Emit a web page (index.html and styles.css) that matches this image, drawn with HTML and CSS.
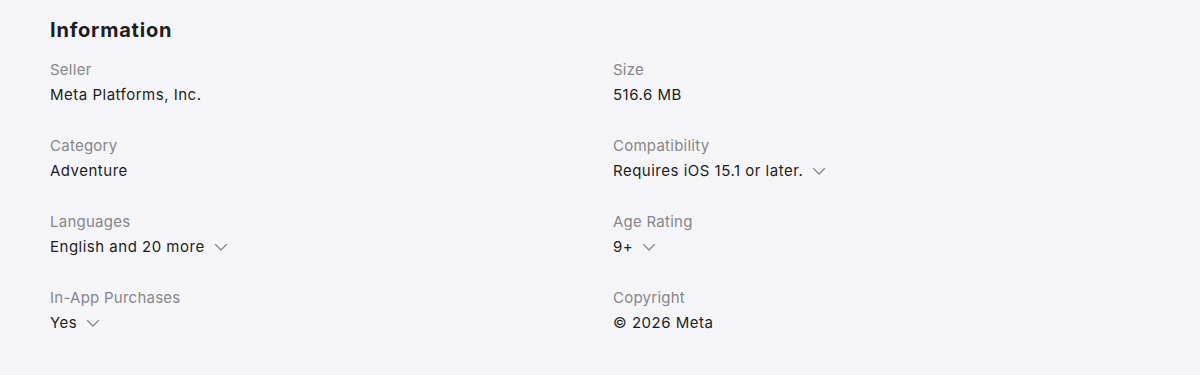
FILE: index.html
```html
<!DOCTYPE html>
<html lang="en">
<head>
    <meta charset="UTF-8">
    <meta name="viewport" content="width=device-width, initial-scale=1.0">
    <title>Information</title>
    <link rel="stylesheet" href="styles.css">
</head>
<body>
    <section class="info">
        <h2>Information</h2>
        <dl class="info-grid">
            <div class="item">
                <dt>Seller</dt>
                <dd>Meta Platforms, Inc.</dd>
            </div>
            <div class="item">
                <dt>Size</dt>
                <dd>516.6 MB</dd>
            </div>
            <div class="item">
                <dt>Category</dt>
                <dd>Adventure</dd>
            </div>
            <div class="item">
                <dt>Compatibility</dt>
                <dd>Requires iOS 15.1 or later.
                    <svg class="chev" viewBox="0 0 12 7"><path d="M0.5 0.5 L6 6 L11.5 0.5"/></svg>
                </dd>
            </div>
            <div class="item">
                <dt>Languages</dt>
                <dd>English and 20 more
                    <svg class="chev" viewBox="0 0 12 7"><path d="M0.5 0.5 L6 6 L11.5 0.5"/></svg>
                </dd>
            </div>
            <div class="item">
                <dt>Age Rating</dt>
                <dd>9+
                    <svg class="chev" viewBox="0 0 12 7"><path d="M0.5 0.5 L6 6 L11.5 0.5"/></svg>
                </dd>
            </div>
            <div class="item">
                <dt>In-App Purchases</dt>
                <dd>Yes
                    <svg class="chev" viewBox="0 0 12 7"><path d="M0.5 0.5 L6 6 L11.5 0.5"/></svg>
                </dd>
            </div>
            <div class="item">
                <dt>Copyright</dt>
                <dd>© 2026 Meta</dd>
            </div>
        </dl>
    </section>
</body>
</html>
```

FILE: styles.css
```css
:root {
    --bg: #f5f5f7;
    --text: #1d1d1f;
    --muted: #86868b;
}
body {
    margin: 0;
    background: var(--bg);
    color: var(--text);
    font-family: Inter, "Noto Sans", sans-serif;
}
.info { padding: 18px 50px 0 50px; }
h2 {
    margin: 0 0 18px 0;
    font-size: 20px;
    line-height: 24px;
    font-weight: 700;
    letter-spacing: 0.8px;
}
.info-grid {
    margin: 0;
    display: grid;
    grid-template-columns: repeat(2, 1fr);
    column-gap: 26px;
    row-gap: 31px;
}
.item dt {
    font-size: 15px;
    line-height: 20px;
    color: var(--muted);
    letter-spacing: 0.25px;
}
.item dd {
    margin: 5px 0 0 0;
    font-size: 15px;
    line-height: 20px;
    letter-spacing: 0.5px;
    display: flex;
    align-items: center;
    gap: 10px;
}
.chev {
    width: 12px;
    height: 7px;
    fill: none;
    stroke: var(--muted);
    stroke-width: 1.3;
    stroke-linecap: round;
    stroke-linejoin: round;
}
```
